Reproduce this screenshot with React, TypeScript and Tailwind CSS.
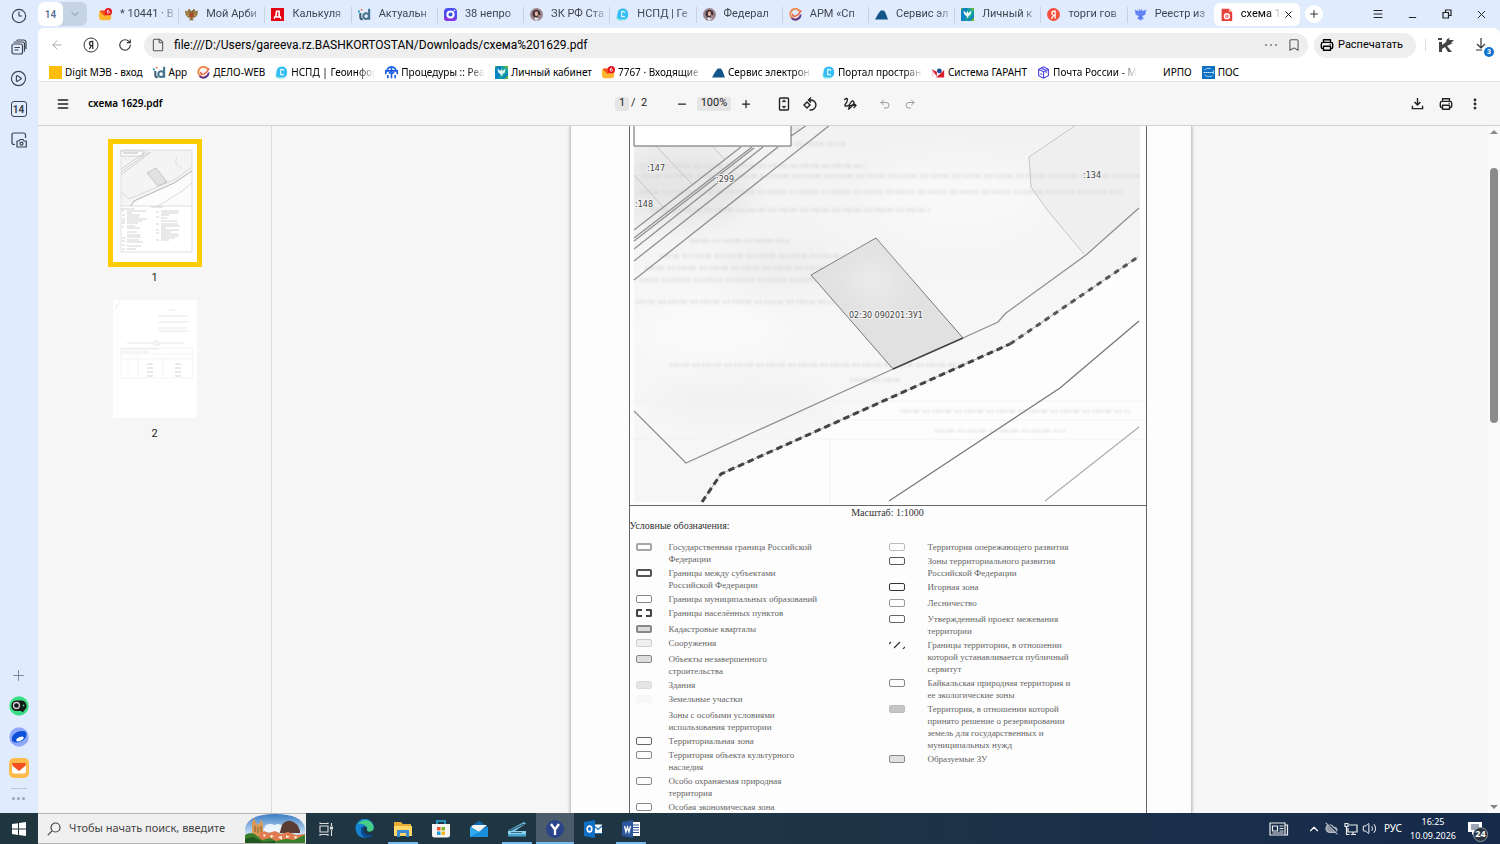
import React from 'react';
import clsx from 'clsx';
import {
  ArrowLeft,
  Bookmark,
  ChevronDown,
  ChevronUp,
  CirclePlay,
  Clock3,
  CloudOff,
  EllipsisVertical,
  File,
  Menu,
  Minus,
  Plus,
  Redo2,
  RotateCw,
  Undo2,
  Volume2,
  X,
} from 'lucide-react';

type IconName =
  | 'mail'
  | 'eagle'
  | 'court'
  | 'digit'
  | 'camera'
  | 'portrait'
  | 'nspd'
  | 'delo'
  | 'hill'
  | 'tree'
  | 'yandex'
  | 'crest'
  | 'pdf'
  | 'yellow'
  | 'procedures'
  | 'garant'
  | 'box'
  | 'pos'
  | 'blank';

const iconShapes: Record<IconName, React.ReactNode> = {
  mail: (
    <>
      <rect x="0" y="3" width="15" height="12" rx="3" fill="#fdb62f" />
      <path d="M1 4l6 6 7-6-1-1H2z" fill="#f4511e" />
      <circle cx="11.5" cy="4.5" r="4.5" fill="#e5131d" />
      <circle cx="11.5" cy="5.2" r="1.4" fill="none" stroke="#fff" strokeWidth="1" />
      <path d="M10.1 5q0-2.600 2-2.800" fill="none" stroke="#fff" strokeWidth="1" />
    </>
  ),
  eagle: (
    <>
      <path d="M8 4L5 1 3 3l2 2L0 3l1 6 3 3h3l-2 3h6l-2-3h3l3-3 1-6-5 2 2-2-2-2z" fill="#8d6b35" />
      <rect x="6" y="6" width="4" height="5" rx="1" fill="#b3432f" />
      <path d="M2 6l3 2M2 9l3 1M14 6l-3 2M14 9l-3 1" stroke="#d7b56d" />
    </>
  ),
  court: (
    <>
      <rect width="16" height="16" fill="#e30613" />
      <path d="M3.500 13.500V10H5l1-7h5v7h1.500v3.500H11V12H5v1.500zM7.800 5L7 10h2V5z" fill="#fff" />
    </>
  ),
  digit: (
    <>
      <circle cx="10" cy="10" r="3.500" fill="none" stroke="#47758f" strokeWidth="2.600" />
      <path d="M13.700 1v13.500" stroke="#47758f" strokeWidth="2.600" />
      <path d="M2.800 6v5q0 3 3 3" fill="none" stroke="#3a5a70" strokeWidth="2.400" />
      <rect x="0" y="3" width="2.500" height="2.500" fill="#35a4c6" />
      <circle cx="4.500" cy="2" r="1.200" fill="#f06d4f" />
    </>
  ),
  camera: (
    <>
      <rect width="16" height="16" rx="5" fill="#4b4df0" />
      <path d="M0 11v1a4 4 0 0 0 4 4h7a5 5 0 0 0 5-4z" fill="#8936dc" />
      <circle cx="8" cy="8" r="5" fill="#fff" />
      <circle cx="8" cy="8" r="2.500" fill="#3554d9" />
      <circle cx="13" cy="3" r="1" fill="#fff" />
    </>
  ),
  portrait: (
    <>
      <circle cx="8" cy="8" r="8" fill="#9d858b" />
      <path d="M4 4q4-4 8 0l1 5-3-1-1 6H4l1-3-2-3z" fill="#3c2c35" />
      <path d="M6 5l3-1 1 4-2 2-2-1z" fill="#e5b69e" />
      <path d="M4 13l3-2 4 2-3 3z" fill="#ddd" />
    </>
  ),
  nspd: (
    <>
      <path d="M4 2q3-2 7-1 4 2 4 7 0 6-5 6H3q-2 0-2-2l1-6q0-3 2-4z" fill="#37bdf5" />
      <path d="M7 4v6.500h4M7 4.500q3-1 4 1.500" fill="none" stroke="#e4faff" strokeWidth="1.500" />
      <path d="M1 11q1 4 5 3.500l6-.5" fill="none" stroke="#6fe0df" strokeWidth="1.600" />
    </>
  ),
  delo: (
    <>
      <path d="M13.500 4.500A6.300 6.300 0 1 0 14 9" fill="none" stroke="#f08a4a" strokeWidth="2.400" />
      <path d="M3 12.500q5 4.500 10-.5 1.500-2 1.200-4" fill="none" stroke="#5a3a96" strokeWidth="2.200" />
      <path d="M4.500 7q0 4 3.500 3t7-7" fill="none" stroke="#e8603f" strokeWidth="1.800" />
    </>
  ),
  hill: <path d="M0 14l4-7 3-4h4l2 3 3 8z" fill="#14568c" />,
  tree: (
    <>
      <rect width="16" height="16" fill="#0c83c2" />
      <path d="M8 0h8v7L8 16H5z" fill="#15a2a0" />
      <path d="M3 3l4 3 1-3 1 3 4-3-1 5-3 2v2H7v-2L4 8z" fill="#e7f6ef" />
      <path d="M10 0h6v4zM16 16h-5l5-5zM0 0h3L0 3z" fill="#5bb147" />
    </>
  ),
  yandex: (
    <>
      <circle cx="8" cy="8" r="8" fill="#f8503c" />
      <path d="M10 13V4H8.500Q6 4 6 6.300q0 1.700 2 3L5.500 13M8 9.300h2" fill="none" stroke="#fff" strokeWidth="1.600" />
    </>
  ),
  crest: (
    <path d="M8 3L6 1v3L1 2l1 6 4 2-2 3 4 2 4-2-2-3 4-2 1-6-5 2V1zM5 6l2 2M11 6L9 8" fill="#5d7df2" stroke="#a8b9ff" strokeWidth=".6" />
  ),
  pdf: (
    <>
      <path d="M2 1h9l4 4v11H2z" fill="#e8403a" />
      <path d="M11 1v4h4z" fill="#ffaaa5" />
      <circle cx="8.500" cy="10" r="3" fill="none" stroke="#fff" strokeWidth="1.800" />
      <circle cx="8.500" cy="10" r="1" fill="#fff" />
    </>
  ),
  yellow: <rect width="16" height="16" fill="#fdbd0c" />,
  procedures: (
    <>
      <path d="M8 1v14M3.500 15v-4M12.500 15v-4M1 10V6h14v4" fill="none" stroke="#1b56dc" strokeWidth="2" />
      <path d="M2.500 5Q4 1 8 1t5.500 4M4.500 8.500h7" fill="none" stroke="#236bf2" strokeWidth="2" />
    </>
  ),
  garant: (
    <>
      <path d="M0 4l6 3v6L0 5zM15 5v9H5z" fill="#d8232e" />
      <circle cx="9" cy="6" r="3" fill="#1e4c96" />
      <path d="M1 5v8" stroke="#f4aaaa" />
    </>
  ),
  box: (
    <path d="M8 1l6 3v8l-6 3-6-3V4zM2 4l6 3 6-3M8 7v8M5 2.500l6 3v3M5 9v2" fill="none" stroke="#4a43df" strokeWidth="1.400" />
  ),
  pos: (
    <>
      <rect width="16" height="16" fill="#0b6fc2" />
      <path d="M3 5q2-3 8-2M3 11q4 4 10 1M14 5v5" fill="none" stroke="#bfe5ff" />
      <path d="M2 8h12" stroke="#d8eeff" strokeWidth="1.500" strokeDasharray="2 .5" />
    </>
  ),
  blank: null,
};

const SiteIcon = ({ name }: { name: IconName }) => (
  <svg viewBox="0 0 16 16" className="size-[13px] shrink-0" aria-hidden="true">
    {iconShapes[name]}
  </svg>
);

const tabs: { icon: IconName; title: string }[] = [
  { icon: 'mail', title: '* 10441 · В' },
  { icon: 'eagle', title: 'Мой Арби' },
  { icon: 'court', title: 'Калькуля' },
  { icon: 'digit', title: 'Актуальн' },
  { icon: 'camera', title: '38 непро' },
  { icon: 'portrait', title: 'ЗК РФ Ста' },
  { icon: 'nspd', title: 'НСПД | Ге' },
  { icon: 'portrait', title: 'Федерал' },
  { icon: 'delo', title: 'АРМ «Сп' },
  { icon: 'hill', title: 'Сервис эл' },
  { icon: 'tree', title: 'Личный к' },
  { icon: 'yandex', title: 'торги гов' },
  { icon: 'crest', title: 'Реестр из' },
  { icon: 'pdf', title: 'схема 1' },
];

const bookmarks: { icon: IconName; title: string; cut?: boolean }[] = [
  { icon: 'yellow', title: 'Digit МЭВ - вход' },
  { icon: 'digit', title: 'App' },
  { icon: 'delo', title: 'ДЕЛО-WEB' },
  { icon: 'nspd', title: 'НСПД | Геоинфор', cut: true },
  { icon: 'procedures', title: 'Процедуры :: Реа', cut: true },
  { icon: 'tree', title: 'Личный кабинет' },
  { icon: 'mail', title: '7767 · Входящие -', cut: true },
  { icon: 'hill', title: 'Сервис электрон', cut: true },
  { icon: 'nspd', title: 'Портал простран', cut: true },
  { icon: 'garant', title: 'Система ГАРАНТ' },
  { icon: 'box', title: 'Почта России - М', cut: true },
  { icon: 'blank', title: 'ИРПО' },
  { icon: 'pos', title: 'ПОС' },
];

type Swatch = { frame: string; text: string; spaced?: boolean };

const legendLeft: Swatch[] = [
  { frame: 'border-2 border-[#a5a5a5]', text: 'Государственная граница Российской\nФедерации' },
  { frame: 'border-2 border-[#555]', text: 'Границы между субъектами\nРоссийской Федерации' },
  { frame: 'border border-[#888]', text: 'Границы муниципальных образований' },
  { frame: 'border-2 border-dashed border-[#444]', text: 'Границы населённых пунктов' },
  { frame: 'border-2 border-[#888] bg-[#ddd]', text: 'Кадастровые кварталы', spaced: true },
  { frame: 'border border-[#ccc] bg-[#f0f0f0]', text: 'Сооружения' },
  { frame: 'border border-[#888] bg-[#ddd]', text: 'Объекты незавершенного\nстроительства', spaced: true },
  { frame: 'border border-[#ddd] bg-[#e5e5e5]', text: 'Здания' },
  { frame: 'bg-[#f7f7f7]', text: 'Земельные участки' },
  { frame: '', text: 'Зоны с особыми условиями\nиспользования территории', spaced: true },
  { frame: 'border border-[#666]', text: 'Территориальная зона' },
  { frame: 'border border-[#888]', text: 'Территория объекта культурного\nнаследия' },
  { frame: 'border border-[#888]', text: 'Особо охраняемая природная\nтерритория' },
  { frame: 'border border-[#888]', text: 'Особая экономическая зона' },
];

const legendRight: Swatch[] = [
  { frame: 'border border-[#bbb]', text: 'Территория опережающего развития' },
  { frame: 'border border-[#555]', text: 'Зоны территориального развития\nРоссийской Федерации' },
  { frame: 'border border-[#333]', text: 'Игорная зона' },
  { frame: 'border border-[#999]', text: 'Лесничество', spaced: true },
  { frame: 'border border-[#666]', text: 'Утвержденный проект межевания\nтерритории', spaced: true },
  { frame: 'slashes', text: 'Границы территории, в отношении\nкоторой устанавливается публичный\nсервитут' },
  { frame: 'border border-[#888]', text: 'Байкальская природная территория и\nее экологические зоны' },
  { frame: 'border border-[#bbb] bg-[#c4c4c4]', text: 'Территория, в отношении которой\nпринято решение о резервировании\nземель для государственных и\nмуниципальных нужд' },
  { frame: 'border border-[#888] bg-[#e2e2e2]', text: 'Образуемые ЗУ' },
];

const Legend = ({ items, className }: { items: Swatch[]; className: string }) => (
  <ul className={clsx('flex flex-col gap-0.5', className)}>
    {items.map((item) => (
      <li key={item.text} className={clsx('flex', item.spaced && 'mt-0.5')}>
        <span className="flex h-3 w-4 shrink-0 items-center">
          {item.frame === 'slashes' ? (
            <svg viewBox="0 0 16 8" className="h-2 w-4">
              <path d="M0 3l2-2M5 7l6-6M14 8l2-2" stroke="#333" strokeWidth="1.200" />
            </svg>
          ) : (
            <span className={clsx('h-2 w-4 rounded-[2px]', item.frame)} />
          )}
        </span>
        <span className="whitespace-pre">{item.text}</span>
      </li>
    ))}
  </ul>
);

const PlanMap = () => (
  <svg viewBox="630 126 516 379" className="block w-full" fill="none" aria-label="План участка">
    <defs>
      <linearGradient id="soil" x1="0" y1="0" x2="0" y2="1">
        <stop offset="0" stopColor="#f2f2f2" />
        <stop offset=".55" stopColor="#f7f7f7" />
        <stop offset="1" stopColor="#f6f6f6" />
      </linearGradient>
      <filter id="soft" x="-30%" y="-30%" width="160%" height="160%">
        <feGaussianBlur stdDeviation="14" />
      </filter>
      <filter id="faint">
        <feGaussianBlur stdDeviation="1.200" />
      </filter>
      <clipPath id="sheet">
        <path d="M634 125H1140V257L1010 344 721 474 702 502H634z" />
      </clipPath>
    </defs>
    <path d="M634 125H1140V257L1010 344 721 474 702 502H634z" fill="url(#soil)" />
    <g clipPath="url(#sheet)">
      <g filter="url(#soft)">
        <ellipse cx="680" cy="185" rx="70" ry="40" fill="#e6e6e6" />
        <ellipse cx="780" cy="265" rx="60" ry="26" fill="#efefef" />
        <ellipse cx="710" cy="330" rx="70" ry="22" fill="#fbfbfb" />
        <ellipse cx="740" cy="400" rx="90" ry="16" fill="#f0f0f0" />
        <ellipse cx="960" cy="200" rx="90" ry="40" fill="#f8f8f8" />
      </g>
      <path d="M1076 125l-47 32 2 30 17 24 36 43 56-46v-83z" fill="#efefef" />
      {/* print showing through from the back of the sheet */}
      <g filter="url(#faint)" stroke="#d4d4d4" strokeWidth="4" opacity=".45" strokeDasharray="3 1 5 1 2 1 6 3 4 1 3 2">
        <path d="M642 129h160M645 144h200M640 166h225M642 176h500M640 192h482M650 210h280" />
        <path d="M690 241h100M660 256h202M645 268h210M640 280h222M636 302h220" />
        <path d="M880 350h20M670 365h412M850 380h50" />
      </g>
    </g>
    <path d="M900 411h230M935 431h130" filter="url(#faint)" stroke="#dedede" strokeWidth="4" opacity=".5" strokeDasharray="3 1 5 1 2 1 6 3 4 1 3 2" />
    <path d="M630 401h516M630 420h516M630 439h516M830 439v66" stroke="#f2f2f2" />
    <path d="M811 275l65-37 87 100-70 31z" fill="#e1e1e1" stroke="#777" />
    <path d="M840 275l35-20 30 35-30 20z" fill="#ececec" filter="url(#soft)" />

    <g stroke="#c6c6c6">
      <path d="M657 147l35 37M634 175l29 32M713 147l12 13" />
      <path d="M1076 125l-47 32 2 30 17 24 36 43" />
    </g>
    <g stroke="#909090" strokeWidth="1.300">
      <path d="M634 230l107-83M634 238l118-91M634 241l120-93M634 249l129-102M634 261l144-114" />
      <path d="M791 136l16-11M634 280l196-155" />
      <path d="M634 411l52 52 207-94M963 338l35-16 8-9 80-58 53-47" />
      <path d="M1045 501l94-74" stroke="#b0b0b0" />
    </g>
    <path d="M889 501l171-113 79-67" stroke="#777" strokeWidth="1.300" />
    <path d="M893 369l70-31" stroke="#444" strokeWidth="1.400" />
    <path d="M702 502l19-28 289-130 128-87" stroke="#aaa" />
    <path d="M702 502l19-28 289-130" stroke="#444" strokeWidth="3" strokeDasharray="6.500 4" />
    <path d="M1010 344l128-87" stroke="#555" strokeWidth="3" strokeDasharray="5.500 5" />

    <path d="M634 125v21h157v-21" fill="#fff" stroke="#666" />

    <g className="fill-[#444] font-['DejaVu_Sans'] text-[8px]" stroke="#f4f4f4" strokeWidth="2" paintOrder="stroke">
      <text x="647" y="171">:147</text>
      <text x="716" y="182">:299</text>
      <text x="635" y="207">:148</text>
      <text x="1083" y="178">:134</text>
      <text x="849" y="318">02:30 090201:ЗУ1</text>
    </g>
  </svg>
);

const FirstThumb = () => (
  <svg viewBox="0 0 84 118" className="block h-[118px] w-[84px] bg-white" fill="none" aria-hidden="true">
    <path d="M8 6h71v56H8z" fill="#f4f4f4" />
    <path d="M79 27L62 39 22 57l-5 5h62z" fill="#fcfcfc" />
    <path d="M8 6h71v102H8zM8 62h71" stroke="#d2d2d2" strokeWidth=".7" />
    <path d="M8 7h22v5H8z" fill="#fff" stroke="#aaa" strokeWidth=".5" />
    <path d="M10 9h15" stroke="#999" strokeWidth=".7" />
    <path d="M8 25L34 7M8 28l28-20M8 31L38 8" stroke="#bbb" strokeWidth=".6" />
    <path d="M34 29l9-5 11 14-9 4z" fill="#e2e2e2" stroke="#aaa" strokeWidth=".6" />
    <path d="M8 48l8 7 47-20 14-11M45 62l24-15 10-8" stroke="#ccc" strokeWidth=".7" />
    <path d="M18 62l3-5 40-18 18-12" stroke="#999" strokeWidth=".7" />
    <path d="M64 13q-4 9 5 11M71 16h2M11 15h2" stroke="#d0d0d0" strokeWidth=".6" />
    <g stroke="#b5b5b5" strokeWidth=".6">
      <path d="M38 63h12M8 65h14M14 67h19M14 69h5M14 71h13M14 73h12M14 75h20M14 77h15M14 79h11M14 82h8M14 84h13M14 88h10M14 91h13M14 93h14M14 96h12M14 98h16M14 102h14M14 105h9" />
      <path d="M9 67h2M9 71h3M9 75h3M9 77h3M9 79h3M9 83h2M9 94h3M9 97h3M9 101h3M9 105h3M43 68h3M43 73h3M43 80h3M43 86h3M43 89h3M43 96h3" />
      <path d="M48 67h18M48 69h17M48 71h8M48 74h6M48 77h16M48 80h17M48 82h19M48 84h5M48 86h18M48 88h10M48 90h17M48 92h18M48 94h14M48 96h8" />
    </g>
  </svg>
);

const SecondThumb = () => (
  <svg viewBox="0 0 84 118" className="block h-[118px] w-[84px] bg-white" fill="none" aria-hidden="true">
    <g stroke="#d6d6d6" strokeWidth=".6">
      <path d="M56 10h8M45 16h30M45 22h30M46 28h28M45 31h31M41 41h5M14 43h57M40 45h7" />
      <path d="M8 49h38M8 52h28" />
      <path d="M34 64h6M62 64h6M34 68h6M62 68h6M34 72h6M62 72h6M34 76h6M62 76h6" stroke="#b5b5b5" />
      <path d="M8 48h72v30H8zM8 54h72M8 59h72M15 59v19M25 54v24M50 58v20" stroke="#ececec" />
      <path d="M2 9l5-8" stroke="#ddd" />
    </g>
  </svg>
);

const PrinterGlyph = ({ className }: { className?: string }) => (
  <svg viewBox="0 0 16 16" className={className} fill="none" stroke="currentColor" strokeWidth="1.600" strokeLinejoin="round">
    <path d="M4 5V2h8v3M4 12H3q-1.500 0-1.500-1.500V7Q1.500 5 3.500 5h9q2 0 2 2v3.500Q14.500 12 13 12h-1M4 9.500h8V14H4zM11 7.300h1.200" />
  </svg>
);

const SideRail = () => (
  <nav className="flex w-[38px] shrink-0 flex-col items-center gap-[9px] bg-[#e0ecfd] pt-[5px] pr-px pb-3 text-[#3b424d]">
    <button aria-label="История" className="flex size-[22px] items-center justify-center">
      <Clock3 className="size-4" strokeWidth={1.7} />
    </button>
    <button aria-label="Коллекции" className="flex size-[22px] items-center justify-center">
      <svg viewBox="0 0 16 16" className="size-4" fill="none" stroke="currentColor" strokeWidth="1.200">
        <rect x="1" y="5" width="10.500" height="10" rx="2" />
        <path d="M3 3.500Q3 3 4 3h7.500q2 0 2 2v7.500M5.500 1.500Q6 1 7 1h5.500q2.500 0 2.500 2.500V10M3.500 8.500h5.500M3.500 11h4" />
      </svg>
    </button>
    <button aria-label="Видео" className="flex size-[22px] items-center justify-center">
      <CirclePlay className="size-[17px]" strokeWidth={1.6} />
    </button>
    <button className="flex size-[22px] items-center justify-center">
      <span className="flex size-4 items-center justify-center rounded-[3px] border border-[#3b424d] text-[10px] font-bold">14</span>
    </button>
    <button aria-label="Снимок экрана" className="flex size-[22px] items-center justify-center">
      <svg viewBox="0 0 16 16" className="size-4" fill="none" stroke="currentColor" strokeWidth="1.200">
        <path d="M4 12.500H3Q1 12.500 1 10.500V3q0-2 2-2h9.500q2 0 2 2v3" />
        <path d="M6 9h2l1-1.500h3L13 9h2.300v6H6z" strokeLinejoin="round" />
        <circle cx="10.500" cy="11.700" r="1.500" />
      </svg>
    </button>
    <div className="flex-1" />
    <button aria-label="Добавить" className="flex size-[22px] items-center justify-center text-[#7d8794]">
      <Plus className="size-[17px]" strokeWidth={1.4} />
    </button>
    <button aria-label="Алиса" className="flex size-[22px] items-center justify-center">
      <svg viewBox="0 0 20 20" className="size-5">
        <circle cx="10" cy="10" r="9.700" fill="#3bdd83" />
        <path d="M7 4.500h6a5.500 5.500 0 0 1 2 10l-1 2-2-1.500H7A5.300 5.300 0 0 1 7 4.500z" fill="#151a19" />
        <circle cx="7.500" cy="9.500" r="3" fill="none" stroke="#d9cfd0" strokeWidth="1.300" />
        <circle cx="14.500" cy="9.500" r="1" fill="#44d781" />
      </svg>
    </button>
    <button aria-label="Диск" className="flex size-[22px] items-center justify-center">
      <svg viewBox="0 0 20 20" className="size-5">
        <circle cx="10" cy="10" r="9.700" fill="#8fa8fa" />
        <path d="M3 14q-1-6 5-9 6-2 9 0 2 5-4 9-6 3-10 0z" fill="#0b50d7" />
        <ellipse cx="11" cy="12" rx="4" ry="1.800" transform="rotate(-25 11 12)" fill="#fff" />
      </svg>
    </button>
    <button aria-label="Почта" className="flex size-[22px] items-center justify-center">
      <svg viewBox="0 0 20 20" className="size-5">
        <rect width="20" height="20" rx="5" fill="#fdbb4b" />
        <rect x="3" y="5" width="14" height="10.500" rx="2" fill="#fff" />
        <path d="M3 5h14q0 3-2 4l-5 4-5-4Q3 8 3 5z" fill="#f4511e" />
      </svg>
    </button>
    <div className="flex flex-col items-center gap-2">
      <span className="h-px w-4 bg-[#bdc9d9]" />
      <button aria-label="Ещё" className="flex h-1 gap-0.5">
        <span className="size-[3px] rounded-full bg-[#9ba6b5]" />
        <span className="size-[3px] rounded-full bg-[#9ba6b5]" />
        <span className="size-[3px] rounded-full bg-[#9ba6b5]" />
      </button>
    </div>
  </nav>
);

const TabStrip = () => (
  <div className="flex h-7 items-center text-[11px] text-[#3f4650]">
    <div className="mr-1.5 flex h-6 w-[49px] shrink-0 items-center rounded-md bg-[#c7d4e6]">
      <button className="flex h-6 w-[25px] items-center justify-center rounded-md bg-white text-[10px] font-semibold text-[#5a7394]">14</button>
      <button aria-label="Группы вкладок" className="flex flex-1 justify-center">
        <ChevronDown className="size-3 text-[#7e8c9f]" strokeWidth={2} />
      </button>
    </div>
    <div className="flex min-w-0 flex-1">
      {tabs.map((tab, i) => {
        const active = i === tabs.length - 1;
        return (
          <div
            key={tab.title}
            className={clsx('flex h-[23px] min-w-0 flex-1 items-center gap-2 pt-px pr-1.5 pl-1.5', active && 'rounded-md bg-white text-black')}
          >
            <SiteIcon name={tab.icon} />
            <a href="#" className="min-w-0 flex-1 whitespace-nowrap [mask-image:linear-gradient(to_right,#000_70%,transparent)]">
              {tab.title}
            </a>
            {active ? (
              <button aria-label="Закрыть вкладку" className="-ml-1.5">
                <X className="size-[11px]" strokeWidth={2} />
              </button>
            ) : (
              <span className={clsx('-mr-1.5 -ml-2 h-4 w-px', i < tabs.length - 2 && 'bg-[#c6d2e2]')} />
            )}
          </div>
        );
      })}
    </div>
    <div className="flex w-[200px] shrink-0 items-center pl-[5px] text-[#222]">
      <button aria-label="Новая вкладка" className="flex size-[18px] items-center justify-center rounded-full bg-white">
        <Plus className="size-3" strokeWidth={1.8} />
      </button>
      <div className="flex flex-1 items-center justify-between pr-3 pl-[49px]">
        <button aria-label="Меню"><Menu className="size-3" strokeWidth={2} /></button>
        <button aria-label="Свернуть"><Minus className="mt-1.5 size-[11px]" strokeWidth={2.5} /></button>
        <button aria-label="Окно">
          <svg viewBox="0 0 10 10" className="size-[10px]" fill="none" stroke="currentColor" strokeWidth="1.200">
            <path d="M1 3.500h5.500V9H1zM3.500 3.500V1H9v5.500H6.500" />
          </svg>
        </button>
        <button aria-label="Закрыть"><X className="size-[13px]" strokeWidth={1.8} /></button>
      </div>
    </div>
  </div>
);

const AddressBar = () => (
  <div className="flex h-[34px] items-center pr-3 text-[#333]">
    <div className="flex w-[106px] shrink-0 items-center justify-between pr-3 pl-3">
      <button aria-label="Назад"><ArrowLeft className="size-[14px] text-[#aaa]" strokeWidth={1.7} /></button>
      <button aria-label="Яндекс" className="flex">
        <svg viewBox="0 0 16 16" className="size-4" fill="none" stroke="currentColor">
          <circle cx="8" cy="8" r="7" />
          <path d="M9.700 12V4.500H8.500Q6.500 4.500 6.500 6.500T8.500 8.600h1.200M8.300 8.600L6.300 12" strokeWidth="1.300" />
        </svg>
      </button>
      <button aria-label="Обновить"><RotateCw className="size-[14px]" strokeWidth={2} /></button>
    </div>
    <div className="flex h-[25px] min-w-0 flex-1 items-center rounded-full bg-[#eee] pr-[7px] pl-[7px]">
      <File className="size-[14px] text-[#555]" strokeWidth={1.8} />
      <input
        aria-label="Адрес"
        defaultValue="file:///D:/Users/gareeva.rz.BASHKORTOSTAN/Downloads/схема%201629.pdf"
        className="ml-[9px] min-w-0 flex-1 bg-transparent text-[12px] text-black outline-none"
      />
      <button aria-label="Действия" className="mr-2.5 flex gap-[3px]">
        <span className="size-[2px] rounded-full bg-[#777]" />
        <span className="size-[2px] rounded-full bg-[#777]" />
        <span className="size-[2px] rounded-full bg-[#777]" />
      </button>
      <button aria-label="В закладки"><Bookmark className="size-[14px] text-[#555]" strokeWidth={1.8} /></button>
    </div>
    <button className="ml-1.5 flex h-[25px] w-[102px] items-center gap-1 rounded-full bg-[#eee] pl-1.5 text-[11px] whitespace-nowrap text-black">
      <PrinterGlyph className="size-[14px]" />
      Распечатать
    </button>
    <span className="mr-3 ml-[9px] h-3 w-px bg-[#ddd]" />
    <button aria-label="Расширение" className="mr-5">
      <svg viewBox="0 0 16 16" className="size-4 text-[#444]" fill="currentColor">
        <path d="M0 1h4v2H0zM1 5h3v10H1zM4 8l4-3 1-3 3-1-1 2h5l-3 3h2l-6 3 5 6h-4L7 10l-3 2z" />
      </svg>
    </button>
    <button aria-label="Загрузки" className="relative mr-[-2px]">
      <svg viewBox="0 0 16 16" className="size-4" fill="none" stroke="currentColor" strokeWidth="1.200">
        <path d="M7 1v10M3 7l4 4 4-4M2 13h6" />
      </svg>
      <span className="absolute -right-1 -bottom-1 flex size-[10px] items-center justify-center rounded-full bg-[#0f72cf] text-[7px] font-bold text-white">3</span>
    </button>
  </div>
);

const BookmarkBar = () => (
  <div className="flex h-[19px] items-center gap-[10px] overflow-hidden pt-0.5 pl-[11px] font-['Noto_Sans',sans-serif] text-[10px] text-black">
    {bookmarks.map((mark) => (
      <a key={mark.title} href="#" className="flex shrink-0 items-center gap-[3px] whitespace-nowrap">
        <SiteIcon name={mark.icon} />
        <span className={clsx(mark.cut && 'w-[84px] [mask-image:linear-gradient(to_right,#000_80%,transparent)]')}>
          {mark.title}
        </span>
      </a>
    ))}
  </div>
);

const PdfToolbar = () => (
  <header className="grid h-[45px] grid-cols-[1fr_auto_1fr] items-center border-y border-t-[#e4e4e4] border-b-[#d2d2d2] bg-[#f6f6f6] text-[11px] text-[#222]">
    <div className="flex items-center pl-[18px]">
      <button aria-label="Боковая панель"><Menu className="size-[14px]" strokeWidth={2.5} /></button>
      <h1 className="ml-[18px] font-['Noto_Sans',sans-serif] text-[10px] font-semibold text-black">схема 1629.pdf</h1>
    </div>
    <div className="flex w-[308px] items-center">
      <input aria-label="Страница" defaultValue="1" className="h-[14px] w-[14px] rounded-[3px] bg-[#e5e5e5] text-center outline-none" />
      <span className="ml-0.5 w-4 whitespace-nowrap">/&nbsp; 2</span>
      <button aria-label="Уменьшить" className="ml-[29px]"><Minus className="size-3" strokeWidth={2.5} /></button>
      <input aria-label="Масштаб" defaultValue="100%" className="ml-[9px] h-[14px] w-[34px] rounded-[3px] bg-[#e5e5e5] text-center outline-none" />
      <button aria-label="Увеличить" className="ml-[9px]"><Plus className="size-3" strokeWidth={2.5} /></button>
      <button aria-label="По размеру страницы" className="ml-[25px]">
        <svg viewBox="0 0 14 14" className="size-[14px]" fill="none" stroke="currentColor" strokeWidth="1.400">
          <rect x="2.500" y="1" width="9" height="12" rx="1" />
          <path d="M5.500 5L7 3.500 8.500 5M5.500 9L7 10.500 8.500 9" />
        </svg>
      </button>
      <button aria-label="Повернуть" className="ml-3">
        <svg viewBox="0 0 14 14" className="size-[14px]" fill="none" stroke="currentColor" strokeWidth="1.400">
          <path d="M4 5l3 3-3 3-3-3zM6 3h2a5 5 0 1 1-1.500 9.800M8 .5L5.500 3 8 5.500" />
        </svg>
      </button>
      <button aria-label="Рисовать" className="ml-[26px]">
        <svg viewBox="0 0 14 14" className="size-[14px]" fill="none" stroke="currentColor" strokeWidth="1.300" strokeLinecap="round">
          <path d="M1.500 2.500q3-2 3 0T2.500 7t1.500 2q2 0 3.500-3t3-1.500-2 5-3 2.500 1-2.800 6.500-.7M11 6.500l2 2-2 2" />
        </svg>
      </button>
      <button aria-label="Отменить" disabled className="ml-[22px] text-[#999]"><Undo2 className="size-3" strokeWidth={2} /></button>
      <button aria-label="Повторить" disabled className="ml-[13px] text-[#999]"><Redo2 className="size-3" strokeWidth={2} /></button>
    </div>
    <div className="flex items-center justify-end gap-[15px] pr-[18px]">
      <button aria-label="Скачать">
        <svg viewBox="0 0 14 14" className="size-[13px]" fill="none" stroke="currentColor" strokeWidth="1.500">
          <path d="M7 1v7.500M3.800 5.500L7 8.700l3.200-3.200M1.500 9.500v3h11v-3" />
        </svg>
      </button>
      <button aria-label="Печать"><PrinterGlyph className="size-[14px]" /></button>
      <button aria-label="Дополнительно"><EllipsisVertical className="size-[14px]" strokeWidth={3} /></button>
    </div>
  </header>
);

const Thumbnails = () => (
  <aside className="flex w-[234px] shrink-0 flex-col items-center border-r border-[#dcdcdc] pt-[13px] text-[11px] leading-4 text-[#222]">
    <a href="#page1" className="flex flex-col items-center gap-[3px]">
      <span className="border-[5px] border-[#fc0]"><FirstThumb /></span>
      1
    </a>
    <a href="#page2" className="mt-[14px] flex flex-col items-center gap-2">
      <SecondThumb />
      2
    </a>
  </aside>
);

const Scrollbar = () => (
  <div className="flex w-3 shrink-0 flex-col items-center justify-between bg-[#fafafa] py-1">
    <div className="flex flex-col items-center gap-[34px]">
      <span className="border-x-4 border-b-4 border-x-transparent border-b-[#888]" />
      <span className="h-[255px] w-2 rounded-full bg-[#8b8b8b]" />
    </div>
    <span className="border-x-4 border-t-4 border-x-transparent border-t-[#888]" />
  </div>
);

const PdfPage = () => (
  <main className="flex min-w-0 flex-1 justify-center overflow-hidden pl-px">
    <article
      id="page1"
      className="h-full w-[622px] shrink-0 overflow-hidden border-x border-[#ccc] bg-[#fdfdfd] pr-11 pl-[58px] shadow-[0_0_3px_#aaa] font-['Liberation_Serif',serif]"
    >
      <div className="h-full border-x border-[#666] text-[#666]">
        <PlanMap />
        <div className="border-t border-[#666]">
          <p className="pt-px text-center text-[10px] leading-3 text-[#333]">Масштаб: 1:1000</p>
          <p className="text-[10px] leading-[14px] text-[#333]">Условные обозначения:</p>
          <div className="mt-2 grid grid-cols-[253px_1fr] pl-1.5 text-[9px] leading-3">
            <Legend items={legendLeft} className="[&>li]:gap-[17px]" />
            <Legend items={legendRight} className="[&>li]:gap-[23px]" />
          </div>
        </div>
      </div>
    </article>
  </main>
);

const TaskButton = ({ label, running, active, children }: { label: string; running?: boolean; active?: boolean; children: React.ReactNode }) => (
  <button
    aria-label={label}
    className={clsx('relative flex w-[38px] shrink-0 items-center justify-center', active && 'bg-[#4b5d6b]')}
  >
    <svg viewBox="0 0 20 20" className="size-5" fill="none">
      {children}
    </svg>
    {running && <span className={clsx('absolute bottom-0 h-0.5 bg-[#76b9ed]', active ? 'w-full' : 'w-[30px]')} />}
  </button>
);

const Taskbar = () => (
  <footer className="flex h-[31px] shrink-0 bg-linear-to-r from-[#20363f] via-[#1e3545] to-[#162a4c] font-['Noto_Sans',sans-serif] text-white">
    <button aria-label="Пуск" className="flex w-[38px] shrink-0 items-center justify-center">
      <svg viewBox="0 0 14 14" className="size-[14px]" fill="#fff">
        <path d="M0 2l6-.8v5.400H0zM7 1l7-1v6.600H7zM0 7.500h6v5.400L0 12zM7 7.500h7V14l-7-1z" />
      </svg>
    </button>
    <label className="flex w-[268px] shrink-0 items-center border-y border-[#b5b5b5] bg-[#f0f0f0] pl-[9px] text-[#444]">
      <svg viewBox="0 0 14 14" className="size-[14px] shrink-0" fill="none" stroke="currentColor" strokeWidth="1.200">
        <circle cx="8.500" cy="5.500" r="4.500" />
        <path d="M5.300 8.700L.8 13.200" />
      </svg>
      <input
        aria-label="Поиск"
        placeholder="Чтобы начать поиск, введите"
        className="ml-2 min-w-0 flex-1 bg-transparent text-[11px] outline-none placeholder:text-[#444]"
      />
      <svg viewBox="0 0 61 29" className="h-[29px] w-[61px] shrink-0">
        <defs>
          <linearGradient id="sky" x1="0" y1="0" x2="0" y2="1">
            <stop offset="0" stopColor="#397cc4" />
            <stop offset=".7" stopColor="#cfe3f6" />
          </linearGradient>
          <clipPath id="dome"><path d="M0 29V14Q3 0 30 0t30 14v15z" /></clipPath>
        </defs>
        <g clipPath="url(#dome)">
          <path d="M0 0h61v29H0z" fill="url(#sky)" />
          <path d="M20 12q5-4 9-1 6-3 10 2v5H18z" fill="#fff" opacity=".8" />
          <path d="M35 18l2-7q4-5 9-4 7 2 9 10v2H35z" fill="#5a3c35" />
          <path d="M7 20V9l2-5 2 5 2 2 2-2 1-4 2 5v10h2v4H7z" fill="#d99b55" />
          <path d="M10 12v6M13 13v6M16 12v6" stroke="#8a592f" />
          <path d="M15 19l4-2 5 2 6-2 6 3 7-2 8 3 9-1v8H12z" fill="#e07b4f" />
          <path d="M18 20l3 1-2 2zM25 21l4 1-3 2zM33 23l4-1v4zM41 21l4 2-4 1zM49 22l4 1-3 2z" fill="#fff4e0" />
          <path d="M0 21q6-4 11 0l6 5 8-2 6 3 10-2 8 1 12-6v9H0z" fill="#3b7f2c" />
          <path d="M0 25l8-2 10 5 12-1v2H0z" fill="#22561f" />
        </g>
      </svg>
    </label>
    <div className="flex w-10 shrink-0 items-center justify-center">
      <svg viewBox="0 0 14 14" className="size-[14px]" fill="none" stroke="#ddd" strokeWidth="1.100">
        <path d="M1 4h8v6H1zM1 2V.5M9 2V.5M1 1.500h8M1 12.500h8M1 12v2M9 12v2M12.500 1v3M12.500 8v6" />
        <path d="M11.500 5h2v2h-2z" fill="#ddd" />
      </svg>
    </div>
    <TaskButton label="Edge">
      <path d="M1 12A9 9 0 0 1 18.500 6q1.500 6-4 6-4 0-2.500-3-3-4-6 1-1 6 6 8.500Q3 20 1 12z" fill="#1583d0" />
      <path d="M3 5q6-7 13-2 5 6 1 9-4 2-5-1 1-3-1-4-3-3-8-2z" fill="#47cf87" />
      <path d="M6 10q-1 8 6 9 4 0 6-4-6 3-9-2-1-3 0-5-3-1-3 2z" fill="#0a4a92" />
    </TaskButton>
    <TaskButton label="Проводник" running>
      <path d="M1 3h7l2 2h8v12H1z" fill="#e8ac35" />
      <path d="M1 7h18v10H1z" fill="#ffd867" />
      <path d="M4 11h12v7h-3v-4H7v4H4z" fill="#3f8bd2" />
    </TaskButton>
    <TaskButton label="Магазин">
      <path d="M6 5V2h8v3" stroke="#2dafe5" strokeWidth="1.500" />
      <path d="M1 5h18v11q0 2.500-2.500 2.500h-13Q1 18.500 1 16z" fill="#f5f5f5" />
      <path d="M6 8h3.500v3.500H6z" fill="#f2502f" />
      <path d="M10.500 8H14v3.500h-3.500z" fill="#7db928" />
      <path d="M6 12.500h3.500V16H6z" fill="#1ba2e5" />
      <path d="M10.500 12.500H14V16h-3.500z" fill="#fcb717" />
    </TaskButton>
    <TaskButton label="Почта">
      <path d="M1 8l9-6 9 6v10H1z" fill="#126bb0" />
      <path d="M4 6h14l-8 7-8-5z" fill="#f4f4f4" />
      <path d="M1 8l9 5 9-5v10H1z" fill="#2eabee" />
      <path d="M1 18L19 8v10z" fill="#1a8fdc" />
    </TaskButton>
    <TaskButton label="Сканер" running>
      <path d="M1 11.500L17 3l2 1.500L8 12z" fill="#7cc4e4" />
      <path d="M3 11.500L17 5" stroke="#1f4e66" strokeWidth="1.200" />
      <path d="M1 12h18v5H1z" fill="#8cd0ec" />
      <path d="M1 15h18v2.500H1z" fill="#4aa6cf" />
      <path d="M4 13.500h11" stroke="#356f8c" />
    </TaskButton>
    <TaskButton label="Яндекс Браузер" running active>
      <circle cx="10" cy="10" r="9" fill="#2b4389" />
      <path d="M6 5l4 5.500L14 5M10 10v6" stroke="#fff" strokeWidth="2.300" />
    </TaskButton>
    <TaskButton label="Outlook">
      <path d="M11 5.500h8v9h-8z" fill="#fff" />
      <path d="M11 7l4 3.500L19 7M11 14.500h8" stroke="#1572c5" strokeWidth="1.200" />
      <path d="M1 3l11-2v18L1 17z" fill="#0f6fc6" />
      <ellipse cx="6.500" cy="10" rx="2.300" ry="2.900" stroke="#fff" strokeWidth="1.600" />
    </TaskButton>
    <TaskButton label="Word" running>
      <path d="M10 3h9v14h-9z" fill="#fff" />
      <path d="M12 6h6M12 8.500h6M12 11h6M12 13.500h6" stroke="#2b579a" />
      <path d="M1 3l11-2v18L1 17z" fill="#2b579a" />
      <path d="M3.500 7l1.500 6 1.500-5L8 13l1.500-6" stroke="#fff" strokeWidth="1.300" />
    </TaskButton>
    <div className="flex-1" />
    <div className="flex items-center text-[10px]">
      <svg viewBox="0 0 20 14" className="mr-[18px] h-[14px] w-5" fill="none" stroke="#eee" strokeWidth="1.200">
        <path d="M1 1h15v12H1zM16 3h2.500v10H15" />
        <path d="M3.500 4h5v5h-5zM10.500 4h4M10.500 6.500h4M10.500 9h4M3.500 11h11" />
      </svg>
      <ChevronUp className="mr-1 size-[14px]" strokeWidth={2} />
      <CloudOff className="mr-1.5 size-[13px] fill-[#8d96a3] text-[#b4bac4]" strokeWidth={2.3} />
      <svg viewBox="0 0 14 14" className="mr-1 size-[14px]" fill="none" stroke="#eee" strokeWidth="1.200">
        <path d="M5 3h8v7H4V6M7 12.500h5M9 10v2.500M1 1.500h3v3H1zM2.500 4.500v8h3" />
      </svg>
      <Volume2 className="mr-[7px] size-[15px]" strokeWidth={1.6} />
      <span className="w-[27px]">РУС</span>
      <div className="flex w-[44px] flex-col items-center text-[9px] leading-[14px] whitespace-nowrap">
        <time>16:25</time>
        <time>10.09.2026</time>
      </div>
      <button aria-label="Уведомления" className="relative mr-[18px] ml-[13px]">
        <svg viewBox="0 0 14 14" className="size-[14px]">
          <path d="M0 0h14v10H7l-3 3v-3H0z" fill="#fff" />
          <path d="M3 3h8M3 5h8M3 7h5" stroke="#22355a" strokeWidth=".9" />
        </svg>
        <span className="absolute -right-1.5 -bottom-1.5 flex size-[15px] items-center justify-center rounded-full border border-[#8f97a5] bg-[#2b3340] text-[9px] font-bold">24</span>
      </button>
    </div>
  </footer>
);

export default function App() {
  return (
    <div className="flex h-screen flex-col overflow-hidden bg-[#e0ecfd] font-['Roboto',sans-serif]">
      <div className="flex min-h-0 flex-1">
        <SideRail />
        <div className="flex min-w-0 flex-1 flex-col">
          <TabStrip />
          <div className="flex min-h-0 flex-1 flex-col overflow-hidden rounded-t-md bg-white">
            <AddressBar />
            <BookmarkBar />
            <PdfToolbar />
            <div className="flex min-h-0 flex-1 bg-[#f6f6f6]">
              <Thumbnails />
              <PdfPage />
              <Scrollbar />
            </div>
          </div>
        </div>
      </div>
      <Taskbar />
    </div>
  );
}
